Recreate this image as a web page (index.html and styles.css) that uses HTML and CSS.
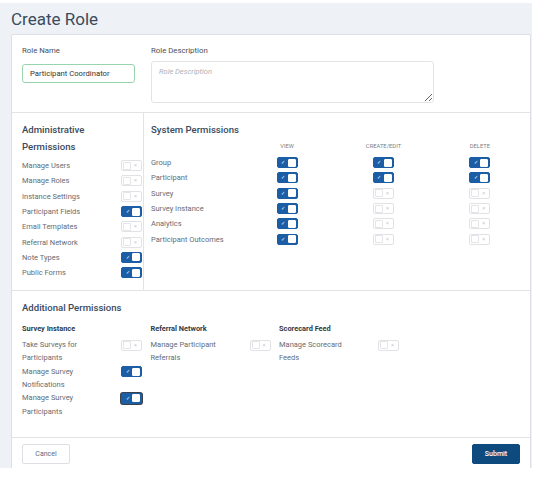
FILE: index.html
```html
<!DOCTYPE html>
<html lang="en">
<head>
    <meta charset="UTF-8">
    <meta name="viewport" content="width=device-width, initial-scale=1.0">
    <title>Create Role</title>
    <link rel="stylesheet" href="styles.css">
</head>
<body>
    <div class="screen">
        <h1 class="page-title">Create Role</h1>

        <div class="card">
            <!-- nome e descricao -->
            <div class="role-info">
                <div class="field field-name">
                    <label for="role-name">Role Name</label>
                    <input type="text" id="role-name" value="Participant Coordinator">
                </div>
                <div class="field field-desc">
                    <label for="role-desc">Role Description</label>
                    <textarea id="role-desc" placeholder="Role Description"></textarea>
                </div>
            </div>

            <div class="permissions">
                <div class="admin">
                    <h2>Administrative Permissions</h2>
                    <div class="perm-list">
                        <div class="perm-row"><span>Manage Users</span><span class="toggle"><span class="knob"></span><span class="mark">&times;</span></span></div>
                        <div class="perm-row"><span>Manage Roles</span><span class="toggle"><span class="knob"></span><span class="mark">&times;</span></span></div>
                        <div class="perm-row"><span>Instance Settings</span><span class="toggle"><span class="knob"></span><span class="mark">&times;</span></span></div>
                        <div class="perm-row"><span>Participant Fields</span><span class="toggle on"><span class="mark">&#10003;</span><span class="knob"></span></span></div>
                        <div class="perm-row"><span>Email Templates</span><span class="toggle"><span class="knob"></span><span class="mark">&times;</span></span></div>
                        <div class="perm-row"><span>Referral Network</span><span class="toggle"><span class="knob"></span><span class="mark">&times;</span></span></div>
                        <div class="perm-row"><span>Note Types</span><span class="toggle on"><span class="mark">&#10003;</span><span class="knob"></span></span></div>
                        <div class="perm-row"><span>Public Forms</span><span class="toggle on"><span class="mark">&#10003;</span><span class="knob"></span></span></div>
                    </div>
                </div>

                <div class="system">
                    <h2>System Permissions</h2>
                    <div class="sys-grid">
                        <div class="col-head"></div>
                        <div class="col-head">View</div>
                        <div class="col-head">Create/Edit</div>
                        <div class="col-head">Delete</div>

                        <div class="sys-label">Group</div>
                        <div class="sys-cell"><span class="toggle on"><span class="mark">&#10003;</span><span class="knob"></span></span></div>
                        <div class="sys-cell"><span class="toggle on"><span class="mark">&#10003;</span><span class="knob"></span></span></div>
                        <div class="sys-cell"><span class="toggle on"><span class="mark">&#10003;</span><span class="knob"></span></span></div>

                        <div class="sys-label">Participant</div>
                        <div class="sys-cell"><span class="toggle on"><span class="mark">&#10003;</span><span class="knob"></span></span></div>
                        <div class="sys-cell"><span class="toggle on"><span class="mark">&#10003;</span><span class="knob"></span></span></div>
                        <div class="sys-cell"><span class="toggle on"><span class="mark">&#10003;</span><span class="knob"></span></span></div>

                        <div class="sys-label">Survey</div>
                        <div class="sys-cell"><span class="toggle on"><span class="mark">&#10003;</span><span class="knob"></span></span></div>
                        <div class="sys-cell"><span class="toggle"><span class="knob"></span><span class="mark">&times;</span></span></div>
                        <div class="sys-cell"><span class="toggle"><span class="knob"></span><span class="mark">&times;</span></span></div>

                        <div class="sys-label">Survey Instance</div>
                        <div class="sys-cell"><span class="toggle on"><span class="mark">&#10003;</span><span class="knob"></span></span></div>
                        <div class="sys-cell"><span class="toggle"><span class="knob"></span><span class="mark">&times;</span></span></div>
                        <div class="sys-cell"><span class="toggle"><span class="knob"></span><span class="mark">&times;</span></span></div>

                        <div class="sys-label">Analytics</div>
                        <div class="sys-cell"><span class="toggle on"><span class="mark">&#10003;</span><span class="knob"></span></span></div>
                        <div class="sys-cell"><span class="toggle"><span class="knob"></span><span class="mark">&times;</span></span></div>
                        <div class="sys-cell"><span class="toggle"><span class="knob"></span><span class="mark">&times;</span></span></div>

                        <div class="sys-label">Participant Outcomes</div>
                        <div class="sys-cell"><span class="toggle on"><span class="mark">&#10003;</span><span class="knob"></span></span></div>
                        <div class="sys-cell"><span class="toggle"><span class="knob"></span><span class="mark">&times;</span></span></div>
                        <div class="sys-cell"><span class="toggle"><span class="knob"></span><span class="mark">&times;</span></span></div>
                    </div>
                </div>
            </div>

            <div class="additional">
                <h2>Additional Permissions</h2>
                <div class="add-cols">
                    <div class="add-col">
                        <h3>Survey Instance</h3>
                        <div class="add-item"><span class="add-label">Take Surveys for Participants</span><span class="toggle"><span class="knob"></span><span class="mark">&times;</span></span></div>
                        <div class="add-item"><span class="add-label">Manage Survey Notifications</span><span class="toggle on"><span class="mark">&#10003;</span><span class="knob"></span></span></div>
                        <div class="add-item"><span class="add-label">Manage Survey Participants</span><span class="toggle on focus"><span class="mark">&#10003;</span><span class="knob"></span></span></div>
                    </div>
                    <div class="add-col">
                        <h3>Referral Network</h3>
                        <div class="add-item"><span class="add-label">Manage Participant Referrals</span><span class="toggle"><span class="knob"></span><span class="mark">&times;</span></span></div>
                    </div>
                    <div class="add-col">
                        <h3>Scorecard Feed</h3>
                        <div class="add-item"><span class="add-label">Manage Scorecard Feeds</span><span class="toggle"><span class="knob"></span><span class="mark">&times;</span></span></div>
                    </div>
                </div>
            </div>

            <div class="card-footer">
                <button class="btn btn-cancel">Cancel</button>
                <button class="btn btn-submit">Submit</button>
            </div>
        </div>
    </div>
</body>
</html>
```

FILE: styles.css
```css
body {
    margin: 0;
    padding: 0;
    background-color: #fff;
    font-family: Roboto, 'Liberation Sans', sans-serif;
    color: #333;
}
.screen {
    width: 532px;
    height: 465px;
    margin-top: 3px;
    padding-left: 11px;
    box-sizing: border-box;
    background-color: #eef2f6;
    overflow: hidden;
}
.page-title {
    margin: 0;
    padding: 6px 0 5px 0;
    font-size: 17px;
    line-height: 20px;
    font-weight: 400;
    color: #3b4a5d;
}
.card {
    width: 520px;
    box-sizing: border-box;
    background-color: #fff;
    border: 1px solid #dcdfe4;
    border-radius: 2px;
}
h2 {
    margin: 0;
    font-size: 9.6px;
    line-height: 17px;
    font-weight: 500;
    color: #3b4a5d;
}

/* role info */
.role-info {
    display: flex;
    padding: 10px 10px 9px 10px;
    border-bottom: 1px solid #e1e3e7;
}
.field label {
    display: block;
    font-size: 7.8px;
    line-height: 12px;
    color: #4a4f57;
    margin-bottom: 4px;
}
.field-name {
    width: 129px;
}
.field-desc {
    width: 283px;
}
.field input {
    width: 113px;
    height: 19px;
    box-sizing: border-box;
    padding: 0 7px;
    border: 1px solid #98d5ae;
    border-radius: 3px;
    font-family: Roboto, sans-serif;
    font-size: 7.7px;
    color: #333;
    outline: none;
}
.field textarea {
    display: block;
    width: 283px;
    height: 42px;
    box-sizing: border-box;
    padding: 5px 7px;
    border: 1px solid #e2e4e7;
    border-radius: 3px;
    font-family: Roboto, sans-serif;
    font-size: 7.5px;
    margin: 0;
}
.field textarea::placeholder {
    font-style: italic;
    color: #aeb2b8;
}

/* permissions */
.permissions {
    display: flex;
    border-bottom: 1px solid #e1e3e7;
}
.admin {
    width: 132px;
    box-sizing: border-box;
    padding: 8px 1px 10px 10px;
    border-right: 1px solid #e1e3e7;
}
.admin h2 {
    width: 90px;
}
.perm-list {
    margin-top: 3px;
}
.perm-row {
    display: flex;
    justify-content: space-between;
    align-items: center;
    height: 15.3px;
    font-size: 7.5px;
    color: #666c74;
}
.system {
    flex: 1;
    padding: 8px 2px 10px 7px;
}
.sys-grid {
    display: grid;
    grid-template-columns: 88px repeat(3, 1fr);
    grid-template-rows: 17px;
    grid-auto-rows: 15.3px;
}
.col-head {
    line-height: 17px;
    text-align: center;
    font-size: 5.8px;
    text-transform: uppercase;
    color: #7a7f86;
}
.sys-label {
    display: flex;
    align-items: center;
    font-size: 7.5px;
    color: #666c74;
    white-space: nowrap;
}
.sys-cell {
    display: flex;
    align-items: center;
    justify-content: center;
}

/* toggles */
.toggle {
    display: flex;
    align-items: center;
    justify-content: space-between;
    width: 21px;
    height: 11px;
    box-sizing: border-box;
    padding: 0 1px;
    border: 1px solid #e0e2e5;
    border-radius: 2px;
    background-color: #fff;
    flex-shrink: 0;
}
.toggle .knob {
    width: 8px;
    height: 8px;
    box-sizing: border-box;
    border: 1px solid #e3e5e8;
    border-radius: 1px;
    background-color: #fff;
}
.toggle .mark {
    width: 9px;
    text-align: center;
    font-size: 5.5px;
    line-height: 9px;
    color: #c4c7cc;
}
.toggle.on {
    background-color: #1b5ea6;
    border-color: #1b5ea6;
}
.toggle.on .knob {
    border-color: #fff;
}
.toggle.on .mark {
    color: #fff;
    font-size: 5px;
}
.toggle.focus {
    box-shadow: 0 0 0 1px #3c4048;
}

/* additional */
.additional {
    padding: 8px 10px 19px 10px;
    border-bottom: 1px solid #e1e3e7;
}
.add-cols {
    display: flex;
    margin-top: 7px;
}
.add-col {
    width: 128.5px;
}
h3 {
    margin: 0 0 2.7px 0;
    font-size: 7.4px;
    line-height: 12px;
    font-weight: 700;
    color: #333a44;
}
.add-item {
    display: flex;
    justify-content: space-between;
    align-items: flex-start;
    width: 120px;
}
.add-label {
    width: 78px;
    font-size: 7.5px;
    line-height: 13.3px;
    color: #666c74;
}
.add-item .toggle {
    margin-top: 1.5px;
}

/* footer */
.card-footer {
    display: flex;
    justify-content: space-between;
    padding: 6px 10px 10px 10px;
}
.btn {
    width: 48px;
    height: 20px;
    border-radius: 2px;
    font-family: Roboto, sans-serif;
    font-size: 7px;
    cursor: pointer;
    padding: 0;
}
.btn-cancel {
    background-color: #fff;
    border: 1px solid #dcdfe4;
    color: #5b6b80;
}
.btn-submit {
    background-color: #0f4a7f;
    border: 1px solid #0f4a7f;
    color: #fff;
    font-weight: 500;
}
```
